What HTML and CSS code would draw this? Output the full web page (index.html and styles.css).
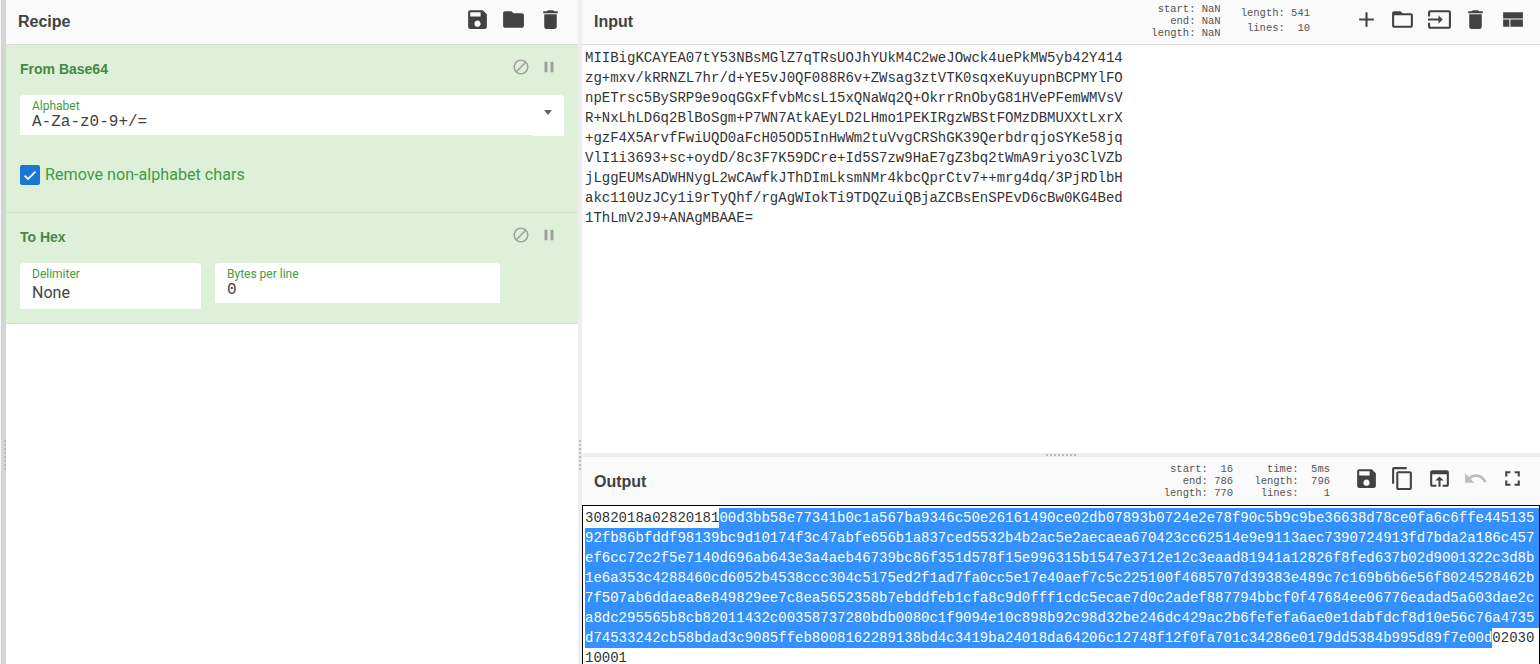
FILE: index.html
```html
<!DOCTYPE html>
<html lang="en">
<head>
<meta charset="utf-8">
<title>CyberChef</title>
<link rel="stylesheet" href="styles.css">
</head>
<body>
<svg class="defs" width="0" height="0" aria-hidden="true">
<symbol id="i-save" viewBox="0 0 24 24"><path d="M17 3H5c-1.11 0-2 .9-2 2v14c0 1.1.89 2 2 2h14c1.1 0 2-.9 2-2V7l-4-4zm-5 16c-1.66 0-3-1.34-3-3s1.34-3 3-3 3 1.34 3 3-1.34 3-3 3zm3-10H5V5h10v4z"/></symbol>
<symbol id="i-folder" viewBox="0 0 24 24"><path d="M10 4H4c-1.1 0-1.99.9-1.99 2L2 18c0 1.1.9 2 2 2h16c1.1 0 2-.9 2-2V8c0-1.1-.9-2-2-2h-8l-2-2z"/></symbol>
<symbol id="i-delete" viewBox="0 0 24 24"><path d="M6 19c0 1.1.9 2 2 2h8c1.1 0 2-.9 2-2V7H6v12zM19 4h-3.5l-1-1h-5l-1 1H5v2h14V4z"/></symbol>
<symbol id="i-add" viewBox="0 0 24 24"><path d="M19 13h-6v6h-2v-6H5v-2h6V5h2v6h6v2z"/></symbol>
<symbol id="i-folder-open" viewBox="0 0 24 24"><path d="M20 6h-8l-2-2H4c-1.1 0-1.99.9-1.99 2L2 18c0 1.1.9 2 2 2h16c1.1 0 2-.9 2-2V8c0-1.1-.9-2-2-2zm0 12H4V8h16v10z"/></symbol>
<symbol id="i-input" viewBox="0 0 24 24"><path d="M21 3.01H3c-1.1 0-2 .9-2 2V9h2V4.99h18v14.03H3V15H1v4.01c0 1.1.9 1.98 2 1.98h18c1.1 0 2-.88 2-1.98v-14c0-1.11-.9-2-2-2zM11 16l4-4-4-4v3H1v2h10v3z"/></symbol>
<symbol id="i-layout" viewBox="0 0 24 24"><path d="M3 19h6v-7H3v7zm7 0h12v-7H10v7zM3 5v6h19V5H3z"/></symbol>
<symbol id="i-copy" viewBox="0 0 24 24"><path d="M16 1H4c-1.1 0-2 .9-2 2v14h2V3h12V1zm3 4H8c-1.1 0-2 .9-2 2v14c0 1.1.9 2 2 2h11c1.1 0 2-.9 2-2V7c0-1.1-.9-2-2-2zm0 16H8V7h11v14z"/></symbol>
<symbol id="i-open" viewBox="0 0 24 24"><path d="M19 4H5c-1.11 0-2 .9-2 2v12c0 1.1.89 2 2 2h4v-2H5V8h14v10h-4v2h4c1.1 0 2-.9 2-2V6c0-1.1-.89-2-2-2zm-7 6l-4 4h3v6h2v-6h3l-4-4z"/></symbol>
<symbol id="i-undo" viewBox="0 0 24 24"><path d="M12.5 8c-2.65 0-5.05.99-6.9 2.6L2 7v9h9l-3.62-3.62c1.39-1.16 3.16-1.88 5.12-1.88 3.54 0 6.55 2.31 7.6 5.5l2.37-.78C21.08 11.03 17.15 8 12.5 8z"/></symbol>
<symbol id="i-full" viewBox="0 0 24 24"><path d="M7 14H5v5h5v-2H7v-3zm-2-4h2V7h3V5H5v5zm12 7h-3v2h5v-5h-2v3zM14 5v2h3v3h2V5h-5z"/></symbol>
<symbol id="i-block" viewBox="0 0 24 24"><path d="M12 2C6.48 2 2 6.48 2 12s4.48 10 10 10 10-4.48 10-10S17.52 2 12 2zM4 12c0-4.42 3.58-8 8-8 1.85 0 3.55.63 4.9 1.69L5.69 16.9C4.63 15.55 4 13.85 4 12zm8 8c-1.85 0-3.55-.63-4.9-1.69L18.31 7.1C19.37 8.45 20 10.15 20 12c0 4.42-3.58 8-8 8z"/></symbol>
<symbol id="i-pause" viewBox="0 0 24 24"><path d="M6 19h4V5H6v14zm8-14v14h4V5h-4z"/></symbol>
<symbol id="i-check" viewBox="0 0 24 24"><path d="M9 16.2 4.8 12l-1.9 1.9L9 20 21.1 7.9 19.2 6z"/></symbol>
</svg>
<div class="app">
  <div class="edge"><span class="dots-v"></span></div>
  <section class="recipe">
    <header class="bar">
      <h1 class="title">Recipe</h1>
      <div class="icons">
        <svg class="ico"><use href="#i-save"/></svg>
        <svg class="ico"><use href="#i-folder"/></svg>
        <svg class="ico"><use href="#i-delete"/></svg>
      </div>
    </header>
    <article class="op op-base64">
      <div class="op-head">
        <h2 class="op-name">From Base64</h2>
        <div class="op-ctrl"><svg class="ctl"><use href="#i-block"/></svg><svg class="ctl"><use href="#i-pause"/></svg></div>
      </div>
      <div class="alpha">
        <div class="field field-alpha">
          <span class="lbl">Alphabet</span>
          <span class="val-mono-l">A-Za-z0-9+/=</span>
        </div>
        <div class="caret"><span class="tri"></span></div>
      </div>
      <label class="chk">
        <span class="box"><svg class="tick"><use href="#i-check"/></svg></span>
        <span class="chk-text">Remove non-alphabet chars</span>
      </label>
    </article>
    <article class="op op-hex">
      <div class="op-head">
        <h2 class="op-name">To Hex</h2>
        <div class="op-ctrl"><svg class="ctl"><use href="#i-block"/></svg><svg class="ctl"><use href="#i-pause"/></svg></div>
      </div>
      <div class="hex-row">
        <div class="field field-delim">
          <span class="lbl">Delimiter</span>
          <span class="val-sans">None</span>
        </div>
        <div class="field field-bytes">
          <span class="lbl">Bytes per line</span>
          <span class="val-mono">0</span>
        </div>
      </div>
    </article>
  </section>
  <div class="gutter"><span class="dots-v"></span></div>
  <main class="io">
    <section class="input">
      <header class="bar">
        <h1 class="title">Input</h1>
        <div class="tools">
          <pre class="stats s1">  start: NaN
    end: NaN
 length: NaN</pre>
          <pre class="stats s2">length: 541
 lines:  10</pre>
          <div class="icons">
            <svg class="ico"><use href="#i-add"/></svg>
            <svg class="ico"><use href="#i-folder-open"/></svg>
            <svg class="ico"><use href="#i-input"/></svg>
            <svg class="ico"><use href="#i-delete"/></svg>
            <svg class="ico"><use href="#i-layout"/></svg>
          </div>
        </div>
      </header>
      <pre class="input-text">MIIBigKCAYEA07tY53NBsMGlZ7qTRsUOJhYUkM4C2weJOwck4uePkMW5yb42Y414
zg+mxv/kRRNZL7hr/d+YE5vJ0QF088R6v+ZWsag3ztVTK0sqxeKuyupnBCPMYlFO
npETrsc5BySRP9e9oqGGxFfvbMcsL15xQNaWq2Q+OkrrRnObyG81HVePFemWMVsV
R+NxLhLD6q2BlBoSgm+P7WN7AtkAEyLD2LHmo1PEKIRgzWBStFOMzDBMUXXtLxrX
+gzF4X5ArvfFwiUQD0aFcH05OD5InHwWm2tuVvgCRShGK39QerbdrqjoSYKe58jq
VlI1i3693+sc+oydD/8c3F7K59DCre+Id5S7zw9HaE7gZ3bq2tWmA9riyo3ClVZb
jLggEUMsADWHNygL2wCAwfkJThDImLksmNMr4kbcQprCtv7++mrg4dq/3PjRDlbH
akc110UzJCy1i9rTyQhf/rgAgWIokTi9TDQZuiQBjaZCBsEnSPEvD6cBw0KG4Bed
1ThLmV2J9+ANAgMBAAE=</pre>
    </section>
    <div class="hsplit"><span class="dots-h"></span></div>
    <section class="output">
      <header class="bar bar-out">
        <h1 class="title title-out">Output</h1>
        <div class="tools">
          <pre class="stats s3">  start:  16
    end: 786
 length: 770</pre>
          <pre class="stats s4">  time:  5ms
length:  796
 lines:    1</pre>
          <div class="icons">
            <svg class="ico"><use href="#i-save"/></svg>
            <svg class="ico"><use href="#i-copy"/></svg>
            <svg class="ico"><use href="#i-open"/></svg>
            <svg class="ico dim"><use href="#i-undo"/></svg>
            <svg class="ico"><use href="#i-full"/></svg>
          </div>
        </div>
      </header>
      <div class="output-text">
        <div class="line"><span>3082018a02820181</span><span class="sel grow">00d3bb58e77341b0c1a567ba9346c50e26161490ce02db07893b0724e2e78f90c5b9c9be36638d78ce0fa6c6ffe445135</span></div>
        <div class="line"><span class="sel grow">92fb86bfddf98139bc9d10174f3c47abfe656b1a837ced5532b4b2ac5e2aecaea670423cc62514e9e9113aec7390724913fd7bda2a186c457</span></div>
        <div class="line"><span class="sel grow">ef6cc72c2f5e7140d696ab643e3a4aeb46739bc86f351d578f15e996315b1547e3712e12c3eaad81941a12826f8fed637b02d9001322c3d8b</span></div>
        <div class="line"><span class="sel grow">1e6a353c4288460cd6052b4538ccc304c5175ed2f1ad7fa0cc5e17e40aef7c5c225100f4685707d39383e489c7c169b6b6e56f8024528462b</span></div>
        <div class="line"><span class="sel grow">7f507ab6ddaea8e849829ee7c8ea5652358b7ebddfeb1cfa8c9d0fff1cdc5ecae7d0c2adef887794bbcf0f47684ee06776eadad5a603dae2c</span></div>
        <div class="line"><span class="sel grow">a8dc295565b8cb82011432c00358737280bdb0080c1f9094e10c898b92c98d32be246dc429ac2b6fefefa6ae0e1dabfdcf8d10e56c76a4735</span></div>
        <div class="line"><span class="sel">d74533242cb58bdad3c9085ffeb8008162289138bd4c3419ba24018da64206c12748f12f0fa701c34286e0179dd5384b995d89f7e00d</span><span>02030</span></div>
        <div class="line"><span>10001</span></div>
      </div>
    </section>
  </main>
</div>
</body>
</html>
```
FILE: styles.css
```css
* { box-sizing: border-box; }
html, body { margin: 0; padding: 0; height: 664px; overflow: hidden; background: #fff; }
body { font-family: Roboto, "Liberation Sans", Arial, sans-serif; color: #424242; }
.defs { position: absolute; }
.app { display: flex; height: 664px; overflow: hidden; }

.edge { width: 6px; flex: none; background: #d5d5d5; border-left: 1px solid #f5f5f5; display: flex; align-items: center; justify-content: flex-end; padding-top: 246px; }
.gutter { width: 4px; flex: none; background: #eee; display: flex; align-items: center; justify-content: center; padding-top: 246px; }
.dots-v { width: 2px; height: 30px; background: repeating-linear-gradient(to bottom, #bbb 0 2px, transparent 2px 4px); }

.recipe { width: 572px; flex: none; background: #fff; display: flex; flex-direction: column; }
.io { flex: 1; min-width: 0; display: flex; flex-direction: column; }

.bar { height: 45px; flex: none; background: #fafafa; border-bottom: 1px solid #ddd; display: flex; align-items: center; justify-content: space-between; padding-right: 9.5px; }
.title { margin: 0; font-size: 16px; line-height: 20px; font-weight: 700; color: #424242; padding-left: 12px; font-family: "Liberation Sans", sans-serif; }
.title-out { position: relative; top: 1px; }
.icons { display: flex; }
.ico { width: 25px; height: 25px; margin: 0 5.75px; fill: #424242; display: block; position: relative; top: -3px; }
.ico.dim { fill: #bdbdbd; }
.tools { display: flex; align-items: center; height: 100%; }
.stats { margin: 0; font-family: "Liberation Mono", monospace; font-size: 10.5px; line-height: 12px; color: #555; }
.s1 { margin-top: -2px; margin-right: 20px; }
.s2 { line-height: 14.5px; margin-top: -3px; margin-right: 38px; }
.s3 { margin-right: 21.3px; margin-top: -1px; }
.s4 { margin-right: 18px; margin-top: -1px; }

.op { background: #dff0d8; border-bottom: 1px solid #d0e6c6; padding: 0 14px; }
.op-base64 { height: 168px; }
.op-hex { height: 111px; }
.op-head { display: flex; justify-content: space-between; align-items: center; height: 48px; }
.op-name { margin: 0; font-size: 14px; line-height: 18px; font-weight: 700; color: #468847; font-family: "Liberation Sans", sans-serif; }
.op-ctrl { display: flex; align-items: center; gap: 10px; padding-right: 6px; position: relative; top: -2px; }
.ctl { width: 18px; height: 18px; fill: #9e9e9e; }
.field { background: #fff; border-radius: 4px 4px 0 0; display: flex; flex-direction: column; padding-left: 12px; }
.lbl { font-size: 12px; line-height: 14px; color: #419a45; }
.alpha { display: flex; margin-top: 2px; }
.field-alpha { flex: 1; height: 40px; padding-top: 4px; border-top-right-radius: 0; }
.val-mono-l { font-family: "Liberation Mono", monospace; font-size: 16px; line-height: 18px; color: #424242; }
.caret { width: 31px; height: 41px; background: #fff; border-top-right-radius: 4px; display: flex; justify-content: center; align-items: center; padding: 0 2px 6px 0; }
.tri { width: 0; height: 0; border-left: 4px solid transparent; border-right: 4px solid transparent; border-top: 5px solid #666; }
.chk { display: flex; align-items: center; gap: 5px; margin-top: 29px; }
.box { width: 20px; height: 20px; background: #1976d2; border-radius: 2px; display: flex; align-items: center; justify-content: center; }
.tick { width: 16px; height: 16px; fill: #fff; }
.chk-text { font-size: 16.15px; line-height: 20px; color: #419a45; }
.hex-row { display: flex; align-items: flex-start; gap: 14px; margin-top: 2px; }
.field-delim { width: 181px; height: 46px; padding-top: 4px; }
.field-bytes { width: 285px; height: 40px; padding-top: 4px; }
.val-sans { font-size: 16px; line-height: 24px; color: #424242; }
.val-mono { font-family: "Liberation Mono", monospace; font-size: 16px; line-height: 18px; color: #424242; }

.input { height: 453px; flex: none; background: #fff; }
.input-text { margin: 0; padding: 3px 3px 0; font-family: "Liberation Mono", monospace; font-size: 14px; line-height: 20px; color: #333; }
.hsplit { height: 4px; flex: none; background: #eee; display: flex; justify-content: center; align-items: center; }
.dots-h { width: 30px; height: 2px; background: repeating-linear-gradient(to right, #bbb 0 2px, transparent 2px 4px); margin-left: -1px; }
.output { flex: 1; min-height: 0; display: flex; flex-direction: column; overflow: hidden; }
.bar-out { height: 48px; border-bottom: 0; }
.output-text { flex: 1; border: 1px solid #000; padding: 2px 0 0 2px; font-family: "Liberation Mono", monospace; font-size: 14px; line-height: 20px; color: #333; min-height: 174px; }
.line { display: flex; height: 20px; white-space: pre; }
.sel { background: #3390ff; color: #fff; }
.grow { flex: 1; }
```
